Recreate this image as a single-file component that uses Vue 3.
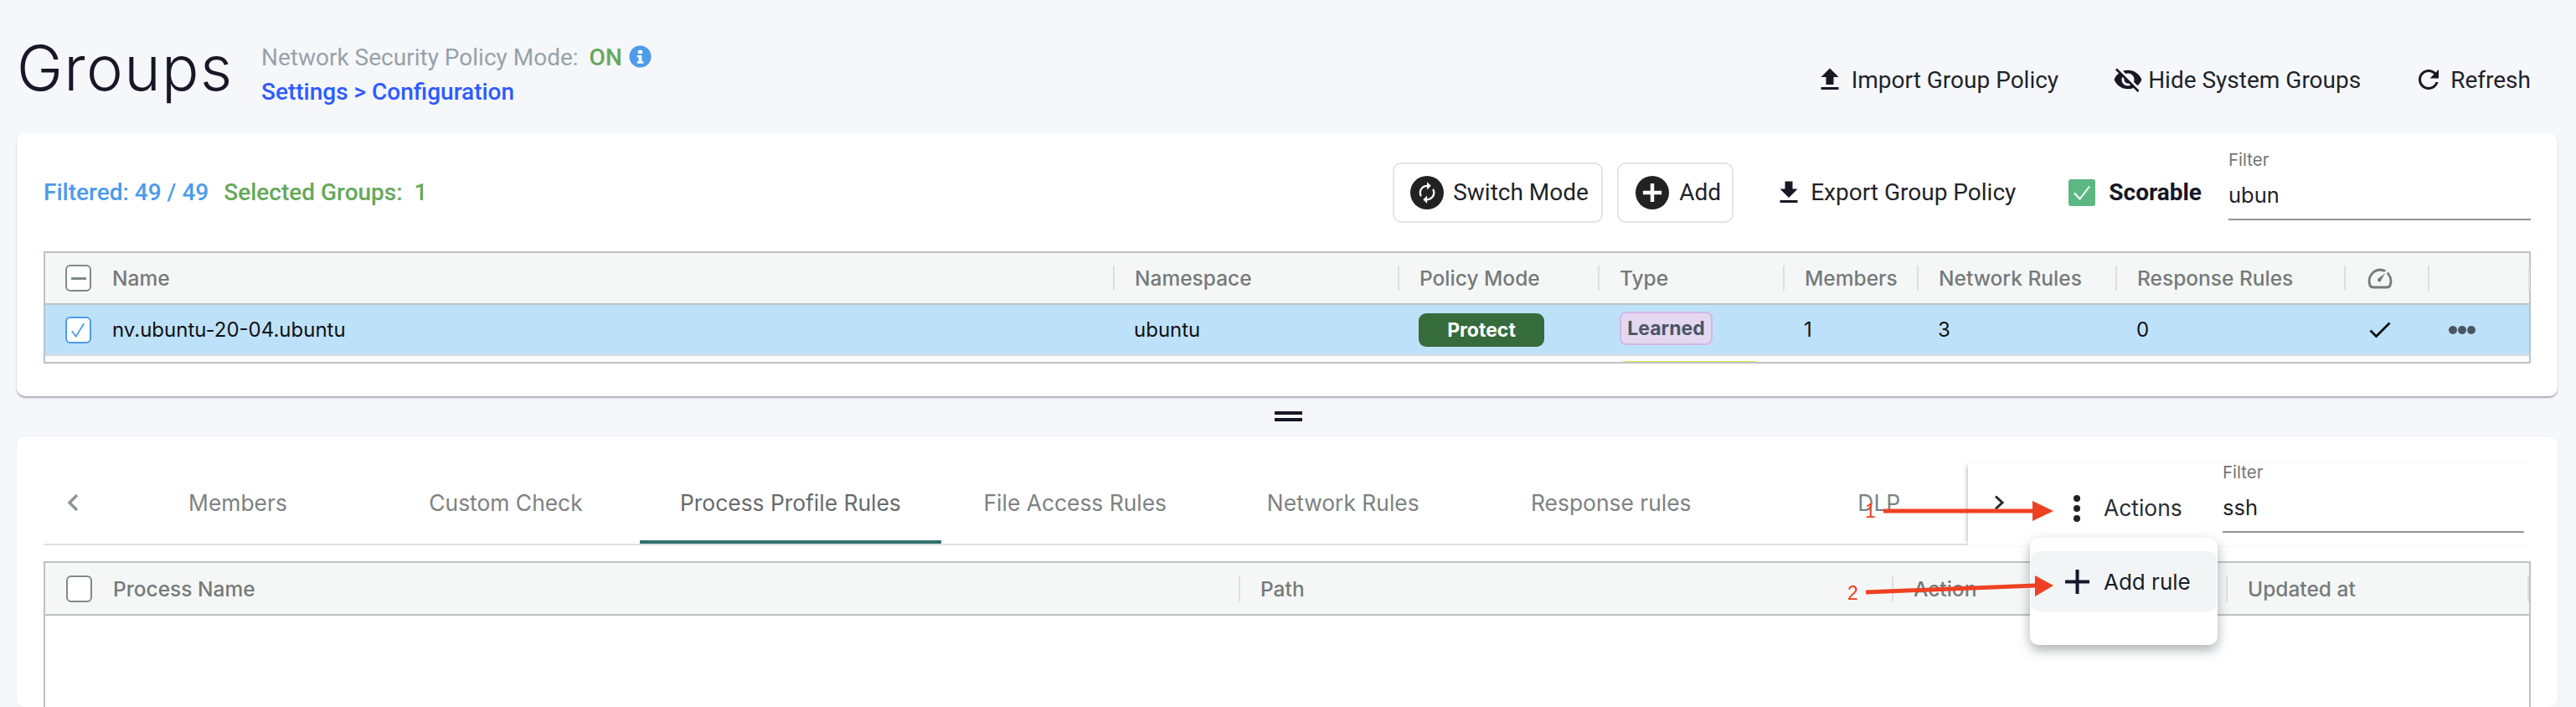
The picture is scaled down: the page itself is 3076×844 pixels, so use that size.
<script setup>
const groupCols = [
  { label: 'Namespace', w: 340 },
  { label: 'Policy Mode', w: 239 },
  { label: 'Type', w: 221 },
  { label: 'Members', w: 160 },
  { label: 'Network Rules', w: 237 },
  { label: 'Response Rules', w: 273 },
]
const tabs = ['Members', 'Custom Check', 'Process Profile Rules', 'File Access Rules', 'Network Rules', 'Response rules', 'DLP']
</script>

<template>
  <div class="page">
    <header class="top">
      <h1 class="title">Groups</h1>
      <div class="mode">
        <div class="mode-line">
          <span>Network Security Policy Mode:</span>
          <span class="on">ON</span>
          <svg class="info" viewBox="0 0 28 28"><circle cx="14" cy="14" r="13.500" fill="#4c9bec"/><rect x="11" y="6" width="6" height="4.500" rx="2" fill="#fff"/><path d="M10 12.500h6v7.500h2v2.500h-8V20h2v-5h-2z" fill="#fff"/></svg>
        </div>
        <a class="link">Settings &gt; Configuration</a>
      </div>
      <div class="top-actions">
        <span class="act">
          <svg class="ic36" viewBox="0 0 24 24"><path d="M9 16h6v-6h4l-7-7-7 7h4zm-4 2h14v2H5z"/></svg>Import Group Policy
        </span>
        <span class="act hide">
          <svg class="ic36" viewBox="0 0 24 24"><path d="M12 7c2.760 0 5 2.240 5 5 0 .65-.13 1.260-.36 1.830l2.920 2.920c1.510-1.260 2.700-2.890 3.430-4.750-1.730-4.390-6-7.500-11-7.500-1.400 0-2.740.25-3.980.7l2.160 2.160C10.740 7.130 11.350 7 12 7zM2 4.270l2.280 2.280.46.46C3.080 8.300 1.780 10.020 1 12c1.730 4.390 6 7.500 11 7.500 1.550 0 3.030-.3 4.380-.84l.42.42L19.730 22 21 20.730 3.270 3 2 4.270zM7.530 9.800l1.550 1.550c-.05.21-.08.43-.08.65 0 1.660 1.340 3 3 3 .22 0 .44-.03.65-.08l1.550 1.550c-.67.33-1.410.53-2.200.53-2.760 0-5-2.240-5-5 0-.79.2-1.530.53-2.200z"/></svg>Hide System Groups
        </span>
        <span class="act ref">
          <svg class="ic36" viewBox="0 0 24 24"><path d="M17.650 6.350C16.200 4.900 14.210 4 12 4c-4.420 0-7.990 3.580-7.990 8s3.570 8 7.990 8c3.730 0 6.840-2.550 7.730-6h-2.080c-.82 2.330-3.040 4-5.650 4-3.310 0-6-2.690-6-6s2.690-6 6-6c1.660 0 3.140.69 4.220 1.780L13 11h7V4l-2.350 2.350z"/></svg>Refresh
        </span>
      </div>
    </header>

    <section class="card first">
      <div class="toolbar">
        <div class="counts">
          <span class="blue">Filtered: 49 / 49</span>
          <span class="green">Selected Groups:&nbsp; 1</span>
        </div>
        <button class="btn switch">
          <svg class="disc" viewBox="0 0 40 40"><circle cx="20" cy="20" r="20" fill="#222"/><g transform="translate(6 6) scale(1.17)"><path d="M12 6v3l4-4-4-4v3c-4.420 0-8 3.580-8 8 0 1.570.46 3.030 1.240 4.260L6.700 14.800c-.45-.83-.7-1.790-.7-2.800 0-3.310 2.690-6 6-6zm6.760 1.740L17.300 9.200c.44.84.7 1.790.7 2.800 0 3.310-2.690 6-6 6v-3l-4 4 4 4v-3c4.420 0 8-3.580 8-8 0-1.570-.46-3.030-1.240-4.260z" fill="#fff"/></g></svg>
          Switch Mode
        </button>
        <button class="btn add">
          <svg class="disc" viewBox="0 0 36 36"><circle cx="18" cy="18" r="18" fill="#222"/><path d="M16 8h4v8h8v4h-8v8h-4v-8H8v-4h8z" fill="#fff"/></svg>
          Add
        </button>
        <span class="act exp">
          <svg class="ic36" viewBox="0 0 24 24"><path d="M19 9h-4V3H9v6H5l7 7 7-7zM5 18v2h14v-2H5z"/></svg>Export Group Policy
        </span>
        <span class="scorable">
          <span class="green-box"><svg viewBox="0 0 32 32"><path d="M7 16.500l6.500 7L25 8.500" fill="none" stroke="#fff" stroke-width="2"/></svg></span>
          Scorable
        </span>
        <div class="filter f1">
          <label>Filter</label>
          <div class="val">ubun</div>
        </div>
      </div>

      <div class="grid g1">
        <div class="thead">
          <div class="cell c-name">
            <span class="cb"><i class="dash"></i></span>
            <span>Name</span>
          </div>
          <div v-for="c in groupCols" :key="c.label" class="cell sep" :style="{ width: c.w + 'px' }">{{ c.label }}</div>
          <div class="cell sep gauge-cell">
            <svg class="gauge" viewBox="0 0 30 26"><path d="M7 24h16c2.500 0 4-1.500 4.300-3.500A13.500 13.500 0 0 0 15 3 13.500 13.500 0 0 0 2.700 20.500C3 22.500 4.500 24 7 24z" fill="none" stroke="#757a7a" stroke-width="2.800"/><path d="M24.500 3.500l-7 11.500a3.200 3.200 0 1 1-4.500-2.800z" fill="#757a7a" stroke="#f5f7f6" stroke-width="1.800"/></svg>
          </div>
          <div class="cell sep last"></div>
          <div class="cell sep end"></div>
        </div>
        <div class="row">
          <div class="cell c-name">
            <span class="cb on-cb"><svg viewBox="0 0 28 28"><path d="M6 15l5 7L21 6" fill="none" stroke="#4c9bec" stroke-width="1.800"/></svg></span>
            <span>nv.ubuntu-20-04.ubuntu</span>
          </div>
          <div class="cell" style="width:340px">ubuntu</div>
          <div class="cell" style="width:239px"><span class="protect">Protect</span></div>
          <div class="cell" style="width:221px"><span class="learned">Learned</span></div>
          <div class="cell" style="width:160px">1</div>
          <div class="cell" style="width:237px">3</div>
          <div class="cell" style="width:273px">0</div>
          <div class="cell gauge-cell body-gauge"><svg class="check" viewBox="0 0 26 20"><path d="M1.500 10.500l7 7L24.500 1.500" fill="none" stroke="#111" stroke-width="2.800"/></svg></div>
          <div class="cell last"><span class="dots"><i></i><i></i><i></i></span></div>
        </div>
        <div class="peek"><i></i></div>
      </div>
    </section>

    <div class="handle"><i></i><i></i></div>

    <section class="card second">
      <div class="tabbar">
        <svg class="chev-l" viewBox="0 0 16 22"><path d="M13 2L4 11l9 9" fill="none" stroke="#8f9494" stroke-width="3.400"/></svg>
        <div class="tabs">
          <div v-for="(t, i) in tabs" :key="t" class="tab" :class="{ active: i === 2 }">{{ t }}</div>
        </div>
        <div class="tab-right">
          <svg class="chev-r" viewBox="0 0 14 18"><path d="M3 1.500L11 9l-8 7.500" fill="none" stroke="#26282b" stroke-width="3"/></svg>
          <span class="kebab"><i></i><i></i><i></i></span>
          <span class="actions">Actions</span>
          <div class="filter f2">
            <label>Filter</label>
            <div class="val">ssh</div>
          </div>
        </div>
      </div>

      <div class="grid g2">
        <div class="thead">
          <div class="cell c-proc">
            <span class="cb"></span>
            <span>Process Name</span>
          </div>
          <div class="cell sep" style="width:780px">Path</div>
          <div class="cell sep" style="width:399px">Action</div>
          <div class="cell sep" style="width:360px">Updated at</div>
          <div class="cell sep end"></div>
        </div>
      </div>

      <div class="menu">
        <div class="item">
          <svg class="plus" viewBox="0 0 29 29"><path d="M14.500 0v29M0 14.500h29" stroke="#111827" stroke-width="4" fill="none"/></svg>
          <span>Add rule</span>
        </div>
      </div>
    </section>

    <svg class="notes" width="3076" height="844" viewBox="0 0 3076 844">
      <path d="M2249 607.500h178V598l25 12-25 12v-9.500h-178z" fill="#ee4123"/>
      <path d="M2228 704.500L2430 696.500V687L2452 699L2430 712V701.500L2228 709.500z" fill="#ee4123"/>
      <text x="2227" y="618" class="num">1</text>
      <text x="2206" y="716" class="num">2</text>
    </svg>
  </div>
</template>

<style>
html, body { margin: 0; background: #f5f7fb; }
</style>

<style scoped>
.page {
  position: relative;
  width: 3076px;
  height: 844px;
  overflow: hidden;
  background: #f5f7fb;
  font-family: Inter, "Liberation Sans", sans-serif;
  color: #1f2328;
}
.top {
  height: 159px;
  box-sizing: border-box;
  display: flex;
  align-items: flex-start;
  padding-left: 20px;
}
.title {
  margin: 39px 0 0;
  font-size: 74px;
  letter-spacing: 1.300px;
  line-height: 84px;
  font-weight: 300;
  color: #171726;
  width: 292px;
}
.mode {
  margin-top: 50px;
  font-family: Roboto, sans-serif;
  font-size: 28px;
  color: #98a2a8;
}
.mode-line { display: flex; align-items: center; height: 36px; gap: 13px; }
.on { color: #66a85a; font-weight: 500; margin-right: -5px; }
.info { width: 27px; height: 27px; margin-top: -2px; }
.link { display: block; margin-top: 6px; font-weight: 500; color: #2d5bff; line-height: 36px; }
.top-actions { margin-left: auto; display: flex; margin-top: 77px; margin-right: 54px; }
.act { display: inline-flex; align-items: center; font-family: Roboto, sans-serif; font-size: 28px; color: #1f2328; height: 36px; white-space: nowrap; }
.ic36 { width: 36px; height: 36px; fill: #171726; flex: none; margin-right: 8px; }
.hide { margin-left: 65px; }
.hide .ic36 { margin-right: 6px; }
.ref { margin-left: 63px; }

.card { background: #fff; margin: 0 22px 0 20px; border-radius: 10px; }
.first { height: 314px; box-shadow: 0 2px 2px rgba(70, 80, 90, .45); }
.toolbar { display: flex; align-items: center; height: 141px; padding-left: 32px; }
.counts { font-family: Roboto, sans-serif; font-weight: 500; font-size: 28px; display: flex; gap: 18px; margin-right: auto; }
.blue { color: #4c9bec; }
.green { color: #66a85a; }
.btn {
  display: inline-flex;
  align-items: center;
  height: 72px;
  box-sizing: border-box;
  background: #fff;
  border: 2px solid #e4e4e6;
  border-radius: 10px;
  font: 400 28px Roboto, sans-serif;
  color: #1f2328;
}
.switch { width: 251px; margin-right: 17px; padding: 0 0 0 19px; gap: 11px; }
.add { width: 139px; margin-right: 48px; padding: 0 0 0 20px; gap: 12px; }
.disc { width: 40px; height: 40px; flex: none; }
.exp { margin-right: 63px; }
.scorable { display: inline-flex; align-items: center; gap: 16px; font-family: Roboto, sans-serif; font-weight: 700; font-size: 28px; color: #171726; margin-right: 32px; }
.green-box { width: 32px; height: 32px; background: #5cb882; border-radius: 3px; display: block; }
.green-box svg { display: block; }
.filter label { display: block; font-size: 20.500px; color: #747474; line-height: 24px; margin-bottom: 14px; }
.filter .val { font-size: 25.500px; line-height: 32px; color: #1f2328; border-bottom: 2px solid #949494; }
.f1 { width: 361px; margin-right: 32px; align-self: flex-start; margin-top: 20px; }
.f1 .val { padding-bottom: 12px; }

.grid { margin: 0 32px; border: 2px solid #bcc2c6; box-sizing: border-box; }
.g1 { height: 134px; background: #fbfcfd; }
.thead { display: flex; height: 62px; box-sizing: border-box; background: #f5f7f6; border-bottom: 2px solid #bcc2c6; align-items: center; font-weight: 500; font-size: 24.500px; color: #757a7a; }
.row { display: flex; height: 61px; box-sizing: border-box; background: #bee1fa; border-bottom: 2px solid #d6dbe0; align-items: center; font-size: 24px; color: #111; }
.cell { box-sizing: border-box; height: 30px; display: flex; align-items: center; padding-left: 25px; white-space: nowrap; flex: none; }
.sep { border-left: 2px solid #dde0e0; padding-left: 24px; }
.c-name { width: 1275px; padding-left: 24px; gap: 25px; }
.c-proc { width: 1425px; padding-left: 25px; gap: 25px; }
.gauge-cell { width: 100px; padding-left: 26px; }
.body-gauge { padding-left: 30px; }
.last { width: 120px; }
.end { width: 2px; padding: 0; }
.gauge { width: 30px; height: 26px; flex: none; }
.check { width: 26px; height: 20px; flex: none; }
.cb { width: 31px; height: 32px; box-sizing: border-box; border: 2px solid #7e8a8a; border-radius: 6px; background: #fff; display: flex; align-items: center; justify-content: center; flex: none; }
.dash { width: 18px; height: 3px; background: #7e8a8a; display: block; }
.on-cb { border-color: #4c9bec; }
.on-cb svg { width: 27px; height: 28px; }
.protect { width: 150px; height: 40px; background: #366b3b; color: #fff; border-radius: 9px; font-weight: 700; font-size: 23px; display: flex; align-items: center; justify-content: center; }
.learned { width: 111px; height: 40px; box-sizing: border-box; background: #e3d8f0; border: 2px solid #d0b8ea; border-radius: 8px; color: #4b5563; font-weight: 700; font-size: 23px; display: flex; align-items: center; justify-content: center; margin: -4px 0 0 1px; }
.dots { display: flex; gap: 1px; }
.dots i { width: 10px; height: 10px; border-radius: 50%; background: #4b5563; display: block; }
.peek { height: 7px; position: relative; }
.peek i { position: absolute; left: 1884px; width: 160px; bottom: 0; height: 1px; background: #e8e84c; }

.handle { height: 48px; display: flex; flex-direction: column; align-items: center; justify-content: center; gap: 4px; }
.handle i { width: 33px; height: 4px; background: #171726; display: block; }

.second { position: relative; height: 323px; box-shadow: 0 0 2px rgba(70, 80, 90, .12); }
.tabbar { position: relative; margin: 0 32px; height: 130px; box-sizing: border-box; border-bottom: 2px solid #e0e0e0; display: flex; align-items: flex-end; }
.chev-l { position: absolute; left: 27px; top: 68px; width: 16px; height: 22px; }
.tabs { display: flex; margin-left: 72px; }
.tab { min-width: 320px; box-sizing: border-box; padding: 0 48px; height: 96px; text-align: center; font-size: 26.400px; line-height: 94px; color: #7d8282; white-space: nowrap; }
.active { border-bottom: 4px solid #33716e; color: #666b6b; }
.tab-right { position: absolute; left: 2298px; top: 32px; right: -2px; bottom: -2px; background: #fff; box-shadow: -4px 0 5px -3px rgba(60, 60, 60, .35); }
.chev-r { position: absolute; left: 30px; top: 38px; width: 14px; height: 18px; }
.kebab { position: absolute; left: 126px; top: 38px; display: flex; flex-direction: column; gap: 4px; }
.kebab i { width: 8px; height: 8px; background: #222; border-radius: 50%; display: block; }
.actions { position: absolute; left: 162px; top: 37px; font-size: 26.400px; line-height: 32px; color: #2a2d31; }
.f2 { position: absolute; left: 304px; top: -1px; width: 360px; }
.f2 .val { padding-bottom: 12px; }

.g2 { height: 200px; margin-top: 19px; border-bottom: 0; }
.g2 .thead { height: 63px; }
.menu { position: absolute; left: 2404px; top: 121px; width: 224px; height: 128px; padding-top: 16px; box-sizing: border-box; background: #fff; border-radius: 10px; box-shadow: 0 6px 14px rgba(40, 45, 60, .38); }
.item { margin: 0 1px; height: 72px; background: #f3f4f6; border-radius: 9px; display: flex; align-items: center; padding-left: 41px; gap: 17px; font-size: 26px; color: #171e2b; }
.plus { width: 29px; height: 29px; flex: none; }

.notes { position: absolute; left: 0; top: 0; pointer-events: none; }
.num { font: 400 23px "Liberation Sans", sans-serif; fill: #ee4123; }
</style>
